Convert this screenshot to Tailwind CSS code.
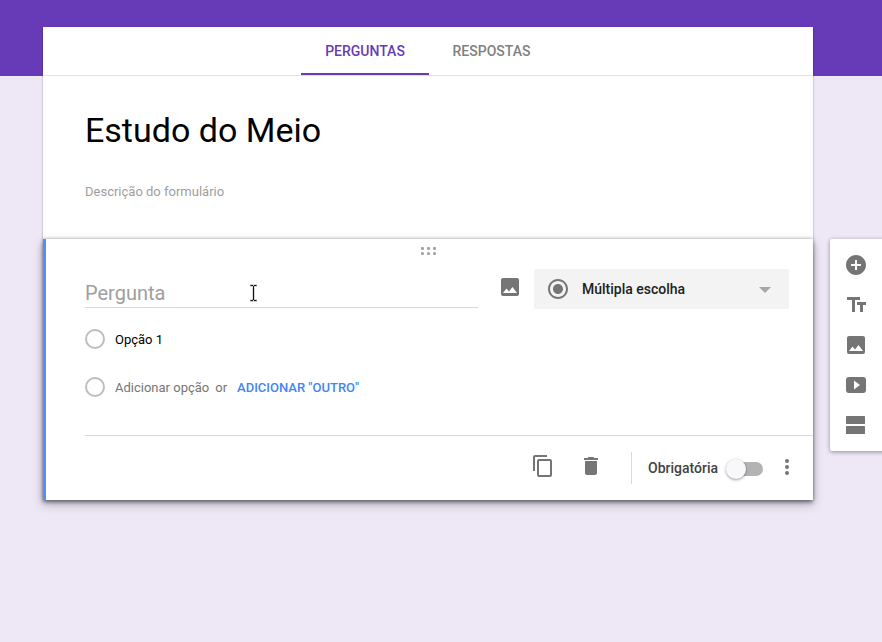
<!DOCTYPE html>
<html lang="pt">
<head>
<meta charset="utf-8">
<title>Estudo do Meio</title>
<script src="https://cdn.jsdelivr.net/npm/@tailwindcss/browser@4"></script>
</head>
<body class="h-[642px] w-[882px] overflow-hidden bg-[#ede7f6] font-['Roboto',sans-serif]">
<div class="h-[76px] bg-[#673ab7]"></div>
<div class="-mt-[49px] flex w-[900px] items-start gap-[17px] pl-[43px]">
  <main class="w-[770px] shrink-0">
    <section class="h-[212px] bg-white shadow-[0_1px_2px_rgba(0,0,0,0.35)]">
      <nav class="flex h-[49px] justify-center border-b border-[#e0e0e0] pr-[1px] text-[14px] font-medium">
        <a class="flex h-[48px] w-[128px] items-center justify-center border-b-2 border-[#673ab7] pt-[2px] text-[#673ab7]">PERGUNTAS</a>
        <a class="flex h-[48px] w-[125px] items-center justify-center text-[#808080]">RESPOSTAS</a>
      </nav>
      <div class="px-[42px] pt-[33px]">
        <h1 class="text-[34px] leading-[42px] text-black">Estudo do Meio</h1>
        <p class="mt-[31px] text-[13px] leading-[20px] text-[#9e9e9e]">Descrição do formulário</p>
      </div>
    </section>
    <section class="relative h-[261px] border-l-[3px] border-[#4d90fe] bg-white pl-[39px] shadow-[0_-1px_2px_rgba(0,0,0,0.12),0_2px_4px_rgba(0,0,0,0.5),0_4px_10px_rgba(0,0,0,0.25)]">
      <div class="flex h-[30px] justify-center pr-[42px] pt-[8px]">
        <svg class="h-[8px] w-[15px]" viewBox="0 0 15 8" fill="#a3a3a3"><circle cx="1.5" cy="1.5" r="1.6"/><circle cx="7.5" cy="1.5" r="1.6"/><circle cx="13.5" cy="1.5" r="1.6"/><circle cx="1.5" cy="6.5" r="1.6"/><circle cx="7.5" cy="6.5" r="1.6"/><circle cx="13.5" cy="6.5" r="1.6"/></svg>
      </div>
      <div class="flex h-[60px] items-start">
        <div class="h-[39px] w-[393px] border-b border-[#d9d9d9] pt-[12px] text-[20px] leading-[24px] text-[#9e9e9e]">Pergunta</div>
        <svg class="ml-[20px] mt-[6px] size-[24px]" viewBox="0 0 24 24" fill="#757575"><path d="M21 19V5c0-1.1-.9-2-2-2H5c-1.1 0-2 .9-2 2v14c0 1.1.9 2 2 2h14c1.1 0 2-.9 2-2zM8.500 13.500l2.500 3.010L14.500 12l4.500 6H5l3.500-4.500z"/></svg>
        <div class="ml-[12px] flex h-[40px] w-[255px] items-center rounded-[2px] bg-[#f3f3f3] pl-[12px] pr-[12px]">
          <svg class="size-[24px]" viewBox="0 0 24 24" fill="#757575"><path d="M12 7c-2.760 0-5 2.240-5 5s2.240 5 5 5 5-2.240 5-5-2.240-5-5-5zm0-5C6.480 2 2 6.480 2 12s4.480 10 10 10 10-4.480 10-10S17.520 2 12 2zm0 18c-4.420 0-8-3.580-8-8s3.580-8 8-8 8 3.580 8 8-3.580 8-8 8z"/></svg>
          <span class="ml-[12px] text-[14px] font-medium text-[#212121]">Múltipla escolha</span>
          <svg class="ml-auto size-[24px]" viewBox="0 0 24 24" fill="#a6a6a6"><path d="M6 10h12l-6 6z"/></svg>
        </div>
      </div>
      <div class="flex h-[20px] items-center text-[13px] text-black">
        <span class="mr-[10px] size-[20px] rounded-full border-2 border-[#bdbdbd]"></span><span class="pt-[2px]">Opção 1</span>
      </div>
      <div class="mt-[28px] flex h-[20px] items-center text-[13px] text-[#757575]">
        <span class="mr-[10px] size-[20px] rounded-full border-2 border-[#bdbdbd]"></span>
        <span class="pt-[2px]">Adicionar opção</span>
        <span class="ml-[6px] pt-[2px]">or</span>
        <span class="ml-[10px] pt-[2px] font-medium text-[#4285f4]">ADICIONAR "OUTRO"</span>
      </div>
      <div class="mt-[38px] flex h-[65px] items-center justify-end border-t border-[#dadada] pr-[14px]">
        <svg class="size-[24px] -mt-[4px]" viewBox="0 0 24 24" fill="#757575"><path d="M16 1H4c-1.100 0-2 .9-2 2v14h2V3h12V1zm3 4H8c-1.100 0-2 .9-2 2v14c0 1.100.9 2 2 2h11c1.100 0 2-.9 2-2V7c0-1.100-.9-2-2-2zm0 16H8V7h11v14z"/></svg>
        <svg class="ml-[24px] size-[24px] -mt-[4px]" viewBox="0 0 24 24" fill="#757575"><path d="M6 19c0 1.100.9 2 2 2h8c1.100 0 2-.9 2-2V7H6v12zM19 4h-3.500l-1-1h-5l-1 1H5v2h14V4z"/></svg>
        <span class="ml-[28px] h-[32px] w-px bg-[#dadada]"></span>
        <span class="ml-[16px] w-[78px] text-[14px] font-medium text-[#424242]">Obrigatória</span>
        <span class="mt-[2px] flex h-[20px] w-[37px] items-center">
          <span class="z-10 size-[20px] shrink-0 rounded-full bg-[#f8f8fa] shadow-[0_1px_3px_rgba(0,0,0,0.4)]"></span>
          <span class="-ml-[18px] h-[14px] w-[35px] rounded-full bg-[#b3b3b3]"></span>
        </span>
        <svg class="ml-[12px] size-[24px] -mt-[2px]" viewBox="0 0 24 24" fill="#757575"><circle cx="12" cy="6" r="2"/><circle cx="12" cy="12" r="2"/><circle cx="12" cy="18" r="2"/></svg>
      </div>
      <svg class="absolute left-[203px] top-[45px] h-[18px] w-[9px]" viewBox="0 0 9 18" fill="none"><path d="M1 1.500h2.500l1 1 1-1H8M4.500 2v14M1 16.500h2.500l1-1 1 1H8" stroke="#ccc" stroke-width="2.500"/><path d="M1.500 1.500H4M5 1.500h2.500M4.500 2v14M1.500 16.500H4M5 16.500h2.500" stroke="#111"/></svg>
    </section>
  </main>
  <aside class="mt-[212px] flex h-[212px] w-[60px] shrink-0 flex-col gap-[16px] rounded-[2px] bg-white pl-[14px] pt-[14px] shadow-[0_1px_4px_rgba(0,0,0,0.4)]">
    <svg class="size-[24px]" viewBox="0 0 24 24" fill="#757575"><path d="M12 2C6.480 2 2 6.480 2 12s4.480 10 10 10 10-4.480 10-10S17.520 2 12 2zm5 11h-4v4h-2v-4H7v-2h4V7h2v4h4v2z"/></svg>
    <svg class="size-[24px]" viewBox="0 0 24 24" fill="#757575"><path d="M3 4v3h5v12h3V7h5V4H3zm19 5h-9v3h3v7h3v-7h3V9z"/></svg>
    <svg class="size-[24px]" viewBox="0 0 24 24" fill="#757575"><path d="M21 19V5c0-1.100-.9-2-2-2H5c-1.100 0-2 .9-2 2v14c0 1.100.9 2 2 2h14c1.100 0 2-.9 2-2zM8.500 13.500l2.500 3.010L14.500 12l4.500 6H5l3.500-4.500z"/></svg>
    <svg class="size-[24px]" viewBox="0 0 24 24" fill="#757575"><path fill-rule="evenodd" d="M5 4h14c2 0 3 1 3 3v10c0 2-1 3-3 3H5c-2 0-3-1-3-3V7c0-2 1-3 3-3zm5 3.500v9l6-4.500z"/></svg>
    <svg class="size-[24px]" viewBox="0 0 24 24" fill="#757575"><rect x="2" y="3" width="19" height="8" rx=".5"/><rect x="2" y="13" width="19" height="8" rx=".5"/></svg>
  </aside>
</div>
</body>
</html>
